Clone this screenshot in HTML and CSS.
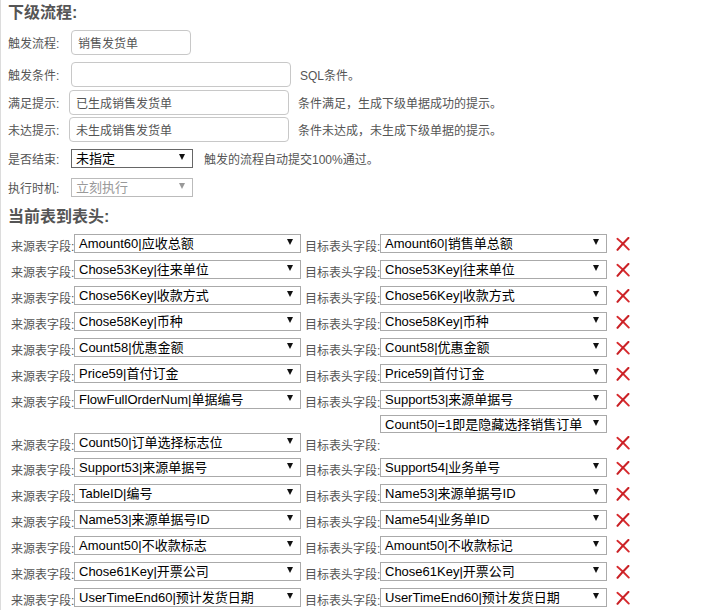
FILE: index.html
```html
<!DOCTYPE html>
<html lang="zh-CN">
<head>
    <meta charset="UTF-8">
    <title>下级流程</title>
    <link rel="stylesheet" href="styles.css">
</head>
<body>
    <h3 class="section-title">下级流程:</h3>
    <div class="form">
        <div class="field field-1">
            <label class="field-label">触发流程:</label>
            <input type="text" class="text-input input-short" value="销售发货单">
        </div>
        <div class="field field-2">
            <label class="field-label">触发条件:</label>
            <input type="text" class="text-input input-long" value="">
            <span class="field-note">SQL条件。</span>
        </div>
        <div class="field field-3">
            <label class="field-label label-narrow">满足提示:</label>
            <input type="text" class="text-input input-long" value="已生成销售发货单">
            <span class="field-note">条件满足，生成下级单据成功的提示。</span>
        </div>
        <div class="field field-4">
            <label class="field-label label-narrow">未达提示:</label>
            <input type="text" class="text-input input-long" value="未生成销售发货单">
            <span class="field-note">条件未达成，未生成下级单据的提示。</span>
        </div>
        <div class="field field-5">
            <label class="field-label">是否结束:</label>
            <div class="select select-small"><span>未指定</span><i class="caret"></i></div>
            <span class="field-note note-wide">触发的流程自动提交100%通过。</span>
        </div>
        <div class="field field-6">
            <label class="field-label">执行时机:</label>
            <div class="select select-small disabled"><span>立刻执行</span><i class="caret"></i></div>
        </div>
    </div>

    <h3 class="section-title title-2">当前表到表头:</h3>
    <div class="mapping" id="mapping"></div>

    <script>
        const rows = [
            ['Amount60|应收总额', 'Amount60|销售单总额'],
            ['Chose53Key|往来单位', 'Chose53Key|往来单位'],
            ['Chose56Key|收款方式', 'Chose56Key|收款方式'],
            ['Chose58Key|币种', 'Chose58Key|币种'],
            ['Count58|优惠金额', 'Count58|优惠金额'],
            ['Price59|首付订金', 'Price59|首付订金'],
            ['FlowFullOrderNum|单据编号', 'Support53|来源单据号'],
            ['Count50|订单选择标志位', '', 'Count50|=1即是隐藏选择销售订单'],
            ['Support53|来源单据号', 'Support54|业务单号'],
            ['TableID|编号', 'Name53|来源单据号ID'],
            ['Name53|来源单据号ID', 'Name54|业务单ID'],
            ['Amount50|不收款标志', 'Amount50|不收款标记'],
            ['Chose61Key|开票公司', 'Chose61Key|开票公司'],
            ['UserTimeEnd60|预计发货日期', 'UserTimeEnd60|预计发货日期']
        ];

        const delIcon = '<svg class="del-icon" width="14" height="14" viewBox="0 0 14 14">' +
            '<path d="M1.4 1.8 C4.6 4.4 9 8.6 12.8 12.6" stroke="#d72a2e" stroke-width="1.9" fill="none" stroke-linecap="round"/>' +
            '<path d="M12.4 1 C9 4.4 4.8 8.8 1.5 12.8" stroke="#c92126" stroke-width="2.1" fill="none" stroke-linecap="round"/>' +
            '</svg>';

        function selectBox(text, cls) {
            return `<div class="select ${cls}"><span>${text}</span><i class="caret"></i></div>`;
        }

        let html = '';
        rows.forEach(row => {
            if (row[2]) {
                html += `<div class="map-row map-extra">${selectBox(row[2], 'select-field select-offset')}</div>`;
            }
            const target = row[1] ? selectBox(row[1], 'select-field') : '<div class="select-empty"></div>';
            html += `<div class="map-row${row[2] ? ' map-tight' : ''}">
                <span class="map-label">来源表字段:</span>
                ${selectBox(row[0], 'select-field')}
                <span class="map-label map-label-target">目标表头字段:</span>
                ${target}
                ${delIcon}
            </div>`;
        });
        document.getElementById('mapping').innerHTML = html;
    </script>
</body>
</html>
```

FILE: styles.css
```css
body {
    margin: 0;
    padding: 0;
    border-left: 1px solid #dcdcdc;
    min-height: 610px;
    box-sizing: border-box;
    font-family: "Liberation Sans", "Noto Sans CJK SC", sans-serif;
    font-size: 12px;
    color: #555;
    background: #fff;
}

.section-title {
    margin: 0;
    padding: 2px 0 0 7px;
    font-size: 16px;
    line-height: 22px;
    font-weight: bold;
    color: #555;
}

.title-2 {
    margin-top: 7px;
}

.form {
    padding-left: 7px;
}

.field {
    display: flex;
    align-items: center;
    height: 25px;
}

.field-1 { margin-top: 6px; }
.field-2 { margin-top: 7px; }
.field-3 { margin-top: 3px; }
.field-4 { margin-top: 2px; }
.field-5 { margin-top: 7px; height: 19px; }
.field-6 { margin-top: 10px; height: 19px; }

.field-label {
    width: 63px;
    flex-shrink: 0;
    white-space: nowrap;
    font-size: 12px;
    color: #555;
}

.label-narrow {
    width: 61px;
}

.text-input {
    box-sizing: border-box;
    height: 25px;
    padding: 0 6px;
    border: 1px solid #c8c8c8;
    border-radius: 4px;
    font-family: inherit;
    font-size: 12px;
    color: #555;
    background: #fff;
    outline: none;
}

.input-short {
    width: 120px;
}

.input-long {
    width: 220px;
}

.field-note {
    margin-left: 9px;
    white-space: nowrap;
    font-size: 12px;
    color: #555;
}

.note-wide {
    margin-left: 11px;
}

.select {
    box-sizing: border-box;
    display: flex;
    justify-content: space-between;
    height: 19px;
    padding: 0 7px 0 4px;
    border: 1px solid #aaa;
    background: #fff;
    color: #000;
    font-size: 13px;
    line-height: 17px;
    white-space: nowrap;
}

.select-small {
    width: 122px;
    border-color: #666;
}

.select-small.disabled {
    border-color: #bbb;
    color: #999;
}

.caret {
    width: 0;
    height: 0;
    margin-top: 4px;
    border-left: 3.5px solid transparent;
    border-right: 3.5px solid transparent;
    border-top: 6px solid #111;
}

.disabled .caret {
    border-top-color: #999;
}

.mapping {
    padding: 6px 0 0 10px;
}

.map-row {
    display: flex;
    align-items: center;
    height: 19px;
    margin-bottom: 7px;
}

.map-extra {
    height: 18px;
    margin-top: -1px;
    margin-bottom: 0;
}

.map-tight {
    height: 19px;
    margin-bottom: 6px;
}

.map-label {
    width: 63px;
    flex-shrink: 0;
    padding-top: 3px;
    white-space: nowrap;
    font-size: 12px;
    color: #555;
}

.map-label-target {
    width: 75px;
    margin-left: 4px;
}

.select-field {
    width: 227px;
    flex-shrink: 0;
}

.map-extra .select-field {
    height: 18px;
}

.select-offset {
    margin-left: 369px;
}

.select-empty {
    width: 227px;
    flex-shrink: 0;
}

.del-icon {
    margin-left: 9px;
    margin-top: 1px;
    flex-shrink: 0;
}
```
